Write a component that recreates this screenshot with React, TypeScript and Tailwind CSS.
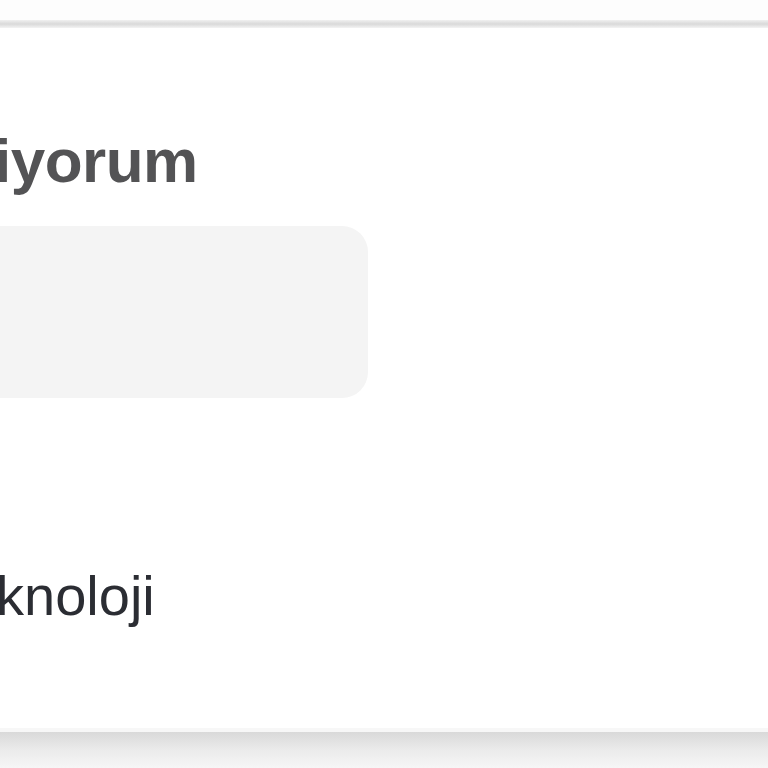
import React from 'react';

export default function App() {
  return (
    <div className="w-[768px] h-[768px] overflow-hidden flex flex-col bg-white" style={{ fontFamily: '"Liberation Sans", Arial, sans-serif' }}>
      <div className="h-[20px] bg-[#fdfdfd]" />
      <div className="h-[8px] bg-gradient-to-b from-[#f0f0f0] via-[#d9d9d9] to-[#f3f3f3]" />
      <div className="flex-1 bg-white overflow-hidden">
        <div className="ml-[-6px] mt-[98px] h-[70px] leading-[70px] text-[62px] font-bold text-[#535355] tracking-[-0.5px]">
          iyorum
        </div>
        <div className="mt-[30px] ml-[-40px] w-[408px] h-[172px] rounded-[26px] bg-[#f4f4f4]" />
        <div className="mt-[166px] ml-[-4px] h-[64px] leading-[64px] text-[56px] text-[#2b2d33]">
          knoloji
        </div>
      </div>
      <div className="h-[4px] bg-[#f7f7f7]" />
      <div className="h-[36px] bg-gradient-to-b from-[#d9d9d9] via-[#ebebeb] to-[#f6f6f6]" />
    </div>
  );
}
